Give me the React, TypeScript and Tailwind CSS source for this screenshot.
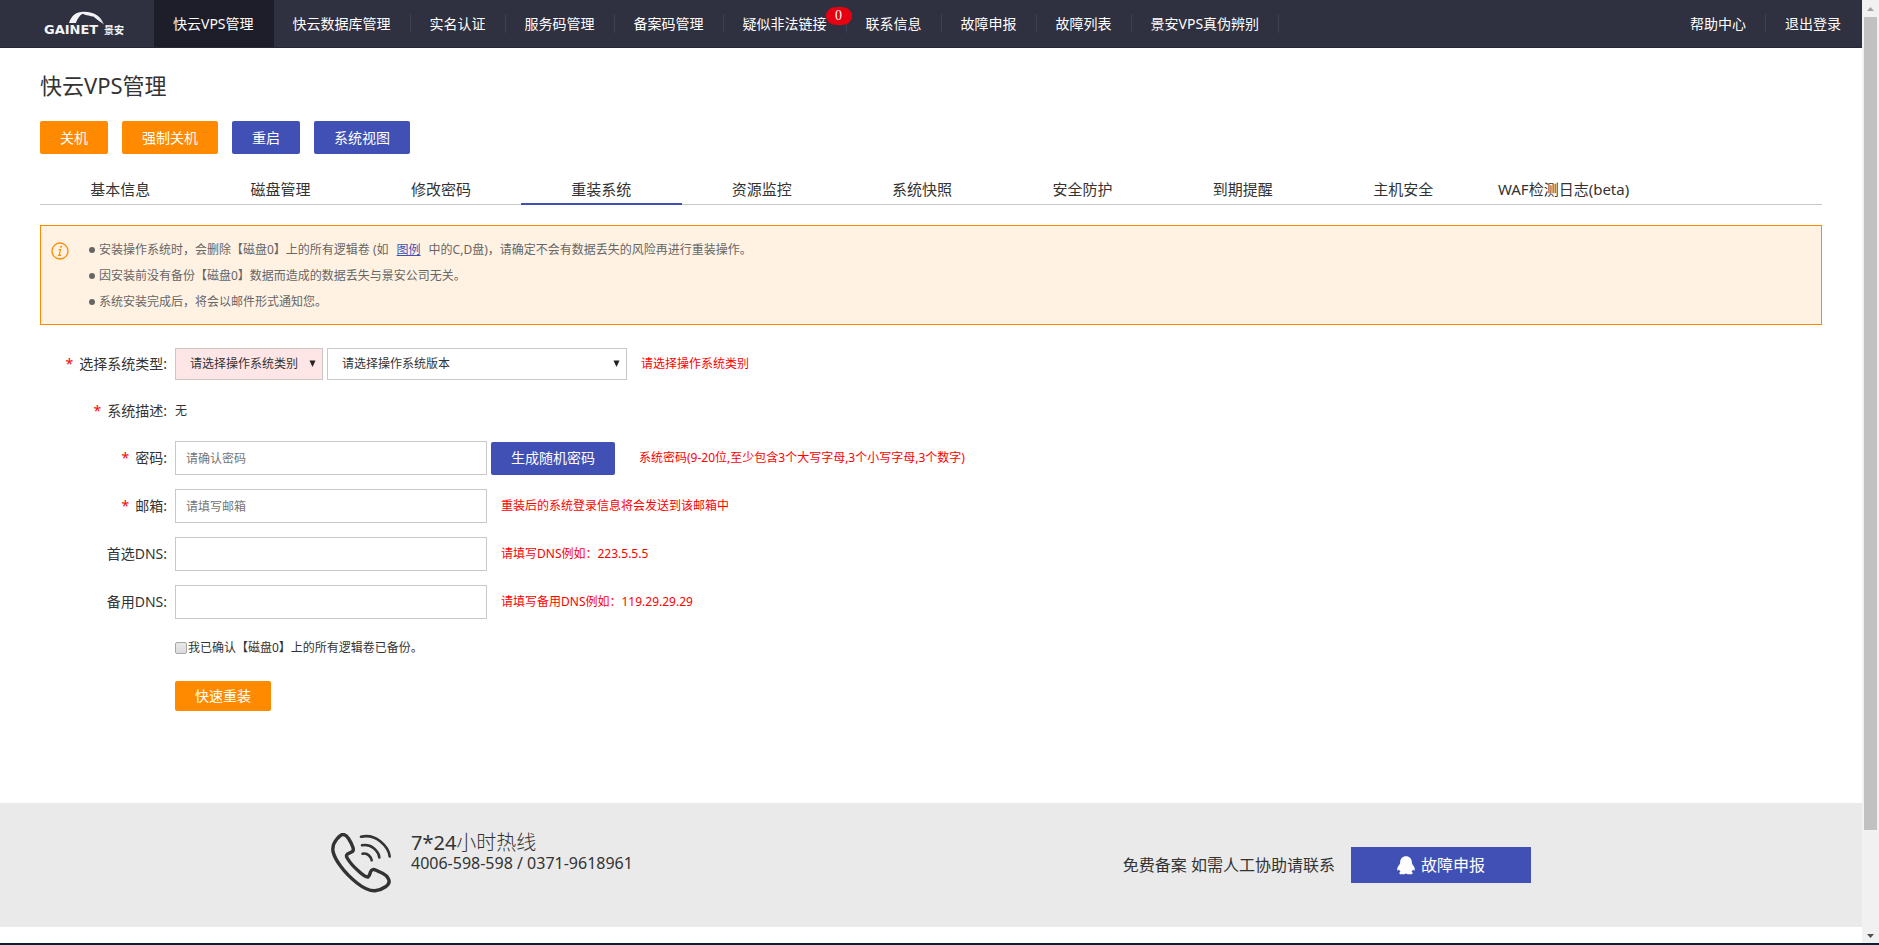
import type { ReactNode } from "react";

const navItems = [
  { label: "快云VPS管理", active: true },
  { label: "快云数据库管理" },
  { label: "实名认证" },
  { label: "服务码管理" },
  { label: "备案码管理" },
  { label: "疑似非法链接", badge: "0" },
  { label: "联系信息" },
  { label: "故障申报" },
  { label: "故障列表" },
  { label: "景安VPS真伪辨别" },
];

const tabs = [
  "基本信息",
  "磁盘管理",
  "修改密码",
  "重装系统",
  "资源监控",
  "系统快照",
  "安全防护",
  "到期提醒",
  "主机安全",
  "WAF检测日志(beta)",
];

const inputClass =
  "h-[34px] w-[312px] rounded-none border border-[#c8c8c8] bg-white px-2.5 text-xs text-[#333] outline-none placeholder:text-[#757575]";

function Logo() {
  return (
    <a href="#" aria-label="GAINET 景安" className="flex w-[154px] shrink-0 items-center pl-[43px]">
      <svg width="84" height="26" viewBox="0 0 84 26" fill="#f4f4f6" aria-hidden="true">
        <path d="M26 12 C28.500 4 34 0.500 41 0.800 C52 1.200 58 5 61 14 C57 7 53 4.500 49 4.600 C46 4.700 42 4.200 39.500 2.800 C36.500 4.500 34.500 8 32.800 12 Z" />
        <path d="M44 2.600 C50 2.200 56 5.500 60.500 13 C56 10 53 8 50.500 5.500 C48 6 45.500 4.500 44 2.600 Z" />
        <text x="1" y="23" fontFamily="DejaVu Sans" fontSize="13" fontWeight="bold">
          GAINET
        </text>
        <text x="61" y="23" fontFamily="Noto Sans CJK SC" fontSize="10" fontWeight="bold">
          景安
        </text>
      </svg>
    </a>
  );
}

function NavLink({ label, active, badge, last }: { label: string; active?: boolean; badge?: string; last?: boolean }) {
  return (
    <li className={active ? "relative flex h-full items-center bg-[#1d1e2a]" : "relative flex h-full items-center"}>
      <a href="#" className="px-[19px] text-sm leading-5 whitespace-nowrap text-white">
        {label}
      </a>
      <span className={active || last ? "h-[19px] w-px" : "h-[19px] w-px bg-[#3a4152]"} />
      {badge && (
        <span className="absolute top-[7px] -right-[5px] z-10 flex h-[18px] w-[26px] items-center justify-center rounded-full bg-[#e60012] font-['Liberation_Serif',serif] text-sm leading-none text-white">
          {badge}
        </span>
      )}
    </li>
  );
}

function Row({
  label,
  htmlFor,
  required,
  hint,
  wideHint,
  children,
}: {
  label: string;
  htmlFor?: string;
  required?: boolean;
  hint?: string;
  wideHint?: boolean;
  children: ReactNode;
}) {
  return (
    <div className="flex h-[34px] items-center">
      <label htmlFor={htmlFor} className="w-[127px] shrink-0 text-right text-sm leading-5 whitespace-nowrap">
        {required && <span className="mr-1.5 text-[#ff0000]">*</span>}
        {label}:
      </label>
      <div className="ml-2 flex items-center gap-1">{children}</div>
      {hint && (
        <span className={wideHint ? "ml-6 text-xs leading-5 text-[#ff0000]" : "ml-3.5 text-xs leading-5 text-[#ff0000]"}>
          {hint}
        </span>
      )}
    </div>
  );
}

function Picker({ id, label, options, className }: { id: string; label: string; options: string; className: string }) {
  return (
    <div className={className}>
      <select
        id={id}
        aria-label={label}
        className="h-8 w-full appearance-none rounded-none border border-[#c8c8c8] bg-transparent pl-3.5 text-xs text-[#333] outline-none"
      >
        <option>{options}</option>
      </select>
      <svg
        className="pointer-events-none absolute top-3 right-[7px]"
        width="7"
        height="7"
        viewBox="0 0 7 7"
        fill="#222"
        aria-hidden="true"
      >
        <path d="M0.500 0.500 H6.500 L3.500 7 Z" />
      </svg>
    </div>
  );
}

function Notice() {
  return (
    <section className="mt-5 flex border border-[#ff8a00] bg-[#fff2e3] pt-[11px] pb-[9px] pl-2.5">
      <svg className="mt-[5px] shrink-0" width="18" height="18" viewBox="0 0 18 18" aria-hidden="true">
        <circle cx="9" cy="9" r="8" fill="none" stroke="#ff8a00" strokeWidth="1.3" />
        <circle cx="10" cy="4.800" r="1" fill="#ff8a00" />
        <path d="M7.600 7.500 H9.500 L8.300 13.300 M7 13.400 H10" fill="none" stroke="#ff8a00" strokeWidth="1.200" />
      </svg>
      <ul className="ml-5 text-xs leading-[26px] text-[#666]">
        <NoticeItem>
          安装操作系统时，会删除【磁盘0】上的所有逻辑卷 (如
          <a href="#" className="mx-2 text-[#3f51b5] underline">
            图例
          </a>
          中的C,D盘)，请确定不会有数据丢失的风险再进行重装操作。
        </NoticeItem>
        <NoticeItem>因安装前没有备份【磁盘0】数据而造成的数据丢失与景安公司无关。</NoticeItem>
        <NoticeItem>系统安装完成后，将会以邮件形式通知您。</NoticeItem>
      </ul>
    </section>
  );
}

function NoticeItem({ children }: { children: ReactNode }) {
  return (
    <li className="flex items-center">
      <span className="mr-1 size-1.5 rounded-full bg-[#666]" />
      <span>{children}</span>
    </li>
  );
}

function PhoneIcon() {
  return (
    <svg width="60" height="60" viewBox="0 0 60 60" fill="none" stroke="#333" strokeLinecap="round" strokeLinejoin="round" aria-hidden="true">
      <path
        strokeWidth="3.400"
        d="M11 1.700 Q9 2.500 5.500 6.500 Q1 12 2 18.500 Q3.500 25 9.500 33 Q16 42 26 50 Q36 58 44 57.800 Q50 57 55 53.500 Q59.500 50 57.500 46 Q56 42.500 52 40.500 L44.500 37 Q40.800 35.500 39.500 39 Q38.500 43 37 44 Q34.500 44.500 28 38.500 Q20 31.500 16.500 25.500 Q14.500 22.500 16.500 21 L20.500 19 Q23 18 22 14.500 Q20.500 10 17.500 5.500 Q14.500 0.800 11 1.700 Z"
      />
      <path strokeWidth="2.600" d="M30 3.700 Q41 1.500 49.500 8.500 Q58 15.500 58.700 23.500" />
      <path strokeWidth="2.600" d="M31 12.300 Q37.500 11 42.500 15 Q48 19.500 48.300 24.500" />
      <path strokeWidth="2.600" d="M31.500 20.700 Q35.500 20 38 22.500 Q40.500 25 40.700 27.300" />
    </svg>
  );
}

function PenguinIcon() {
  return (
    <svg width="18" height="19" viewBox="0 0 18 19" fill="#fff" aria-hidden="true">
      <path d="M9 0.300 C5.500 0.300 3.200 2.800 3.200 6 C3.200 7 2.900 7.800 2.300 8.700 C1 10.300 0 12 0.200 14 C0.400 15 1.300 14.400 2 13.400 C2.300 14.400 2.900 15.200 3.600 15.800 C2.700 16.200 2.200 16.700 2.400 17.400 C2.800 18.600 7.600 18.500 9 17.400 C10.400 18.500 15.200 18.600 15.600 17.400 C15.800 16.700 15.300 16.200 14.400 15.800 C15.100 15.200 15.700 14.400 16 13.400 C16.700 14.400 17.600 15 17.800 14 C18 12 17 10.300 15.700 8.700 C15.100 7.800 14.800 7 14.800 6 C14.800 2.800 12.500 0.300 9 0.300 Z" />
    </svg>
  );
}

function Scrollbar() {
  return (
    <div className="flex w-[17px] shrink-0 flex-col items-center bg-[#f1f1f1]" aria-hidden="true">
      <svg width="17" height="17" viewBox="0 0 17 17" fill="#a3a3a3">
        <path d="M5 11 L8.500 7 L12 11 Z" />
      </svg>
      <div className="w-[13px] flex-1 bg-[#c1c1c1]" />
      <div className="h-24" />
      <svg width="17" height="17" viewBox="0 0 17 17" fill="#505050">
        <path d="M5 8 L8.500 12 L12 8 Z" />
      </svg>
    </div>
  );
}

export default function App() {
  return (
    <div className="flex min-h-screen flex-col bg-white font-['Noto_Sans','Noto_Sans_CJK_SC',sans-serif] text-[#333]">
      <div className="flex flex-1">
        <div className="flex min-w-0 flex-1 flex-col">
          <header className="flex h-12 border-b border-[#262636] bg-[#2f3040]">
            <Logo />
            <nav className="flex flex-1 justify-between">
              <ul className="flex">
                {navItems.map((item) => (
                  <NavLink key={item.label} {...item} />
                ))}
              </ul>
              <ul className="flex pr-px">
                <NavLink label="帮助中心" />
                <NavLink label="退出登录" last />
              </ul>
            </nav>
          </header>

          <main className="flex flex-1 flex-col px-10 pt-[23px]">
            <h1 className="text-[22px] leading-7">快云VPS管理</h1>

            <div className="mt-[22px] flex gap-3.5 text-sm text-white">
              <button className="h-[33px] rounded-xs bg-[#ff8a00] px-5">关机</button>
              <button className="h-[33px] rounded-xs bg-[#ff8a00] px-5">强制关机</button>
              <button className="h-[33px] rounded-xs bg-[#4050b5] px-5">重启</button>
              <button className="h-[33px] rounded-xs bg-[#4050b5] px-5">系统视图</button>
            </div>

            <nav className="mt-[19px] flex h-8 border-b border-[#c8c8c8]">
              {tabs.map((tab) => (
                <a
                  key={tab}
                  href="#"
                  className={
                    tab === "重装系统"
                      ? "-mb-px flex w-[9%] justify-center border-b-2 border-[#4050b5] pt-1 text-[15px] leading-6 whitespace-nowrap"
                      : "flex w-[9%] justify-center pt-1 text-[15px] leading-6 whitespace-nowrap"
                  }
                >
                  {tab}
                </a>
              ))}
            </nav>

            <Notice />

            <form className="mt-[22px] flex flex-col gap-3.5" onSubmit={(e) => e.preventDefault()}>
              <Row label="选择系统类型" htmlFor="os-type" required hint="请选择操作系统类别">
                <Picker id="os-type" label="系统类别" options="请选择操作系统类别" className="relative w-[148px] bg-[#ffe6e6]" />
                <Picker id="os-version" label="系统版本" options="请选择操作系统版本" className="relative w-[300px]" />
              </Row>
              <div className="flex h-8 items-center">
                <Row label="系统描述" required>
                  <span className="text-xs leading-5">无</span>
                </Row>
              </div>
              <Row
                label="密码"
                htmlFor="password"
                required
                wideHint
                hint="系统密码(9-20位,至少包含3个大写字母,3个小写字母,3个数字)"
              >
                <input id="password" type="password" placeholder="请确认密码" className={inputClass} />
                <button type="button" className="h-[33px] rounded-xs bg-[#4050b5] px-5 text-sm text-white">
                  生成随机密码
                </button>
              </Row>
              <Row label="邮箱" htmlFor="email" required hint="重装后的系统登录信息将会发送到该邮箱中">
                <input id="email" type="text" placeholder="请填写邮箱" className={inputClass} />
              </Row>
              <Row label="首选DNS" htmlFor="dns1" hint="请填写DNS例如：223.5.5.5">
                <input id="dns1" type="text" className={inputClass} />
              </Row>
              <Row label="备用DNS" htmlFor="dns2" hint="请填写备用DNS例如：119.29.29.29">
                <input id="dns2" type="text" className={inputClass} />
              </Row>
              <div className="flex h-[30px] items-center pl-[135px]">
                <input
                  id="confirm"
                  type="checkbox"
                  className="size-3 appearance-none rounded-xs border border-[#a8a8a8] bg-linear-to-b from-[#e8e8e8] to-[#dcdcdc] checked:bg-[#4050b5]"
                />
                <label htmlFor="confirm" className="ml-px text-xs leading-5">
                  我已确认【磁盘0】上的所有逻辑卷已备份。
                </label>
              </div>
              <div className="mt-1 pl-[135px]">
                <button className="h-[30px] rounded-xs bg-[#ff8a00] px-5 text-sm text-white">快速重装</button>
              </div>
            </form>
          </main>

          <footer className="mb-4 h-[124px] bg-[#eaeaea]">
            <div className="mx-auto flex max-w-[1200px] justify-between">
              <div className="flex pt-[30px]">
                <PhoneIcon />
                <div className="ml-5">
                  <p className="text-xl leading-5">
                    7*24<span className="font-light">小时热线</span>
                  </p>
                  <p className="text-base leading-5">4006-598-598 / 0371-9618961</p>
                </div>
              </div>
              <div className="flex items-center gap-4 self-start pt-11">
                <span className="text-base">免费备案 如需人工协助请联系</span>
                <a href="#" className="flex h-9 w-[180px] items-center justify-center gap-1.5 bg-[#4050b5] text-base text-white">
                  <PenguinIcon />
                  故障申报
                </a>
              </div>
            </div>
          </footer>
        </div>
        <Scrollbar />
      </div>
      <div className="h-0.5 bg-[#0a2034]" />
    </div>
  );
}
